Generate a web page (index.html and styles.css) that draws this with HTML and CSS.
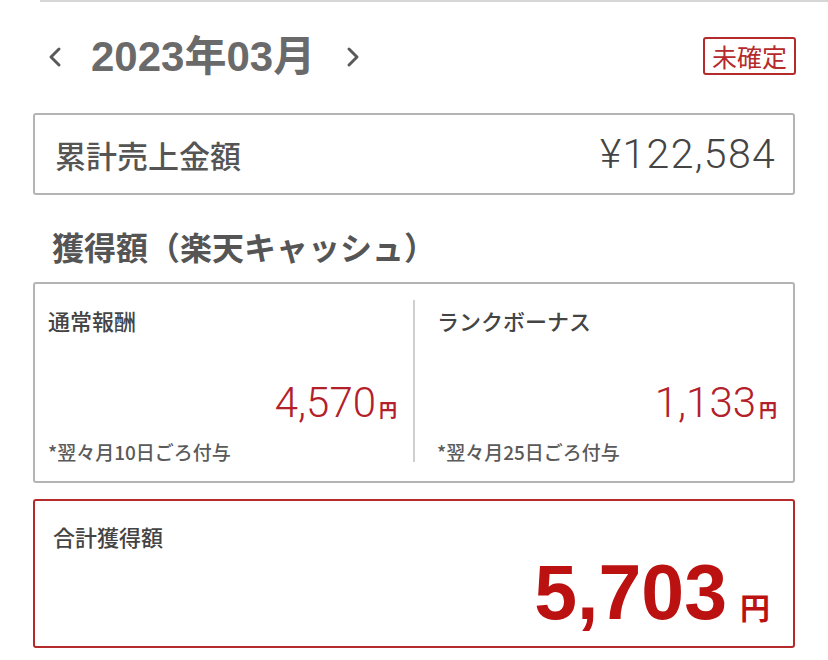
FILE: index.html
```html
<!DOCTYPE html>
<html lang="ja">
<head>
<meta charset="utf-8">
<title>獲得額</title>
<link rel="stylesheet" href="styles.css">
</head>
<body>
<div class="topline"></div>
<main class="page">
  <div class="header">
    <div class="month-nav">
      <svg class="chev chev-prev" viewBox="0 0 16 22" aria-hidden="true"><path d="M12 3 L4 11 L12 19"/></svg>
      <span class="month">2023年03月</span>
      <svg class="chev chev-next" viewBox="0 0 16 22" aria-hidden="true"><path d="M4 3 L12 11 L4 19"/></svg>
    </div>
    <span class="badge">未確定</span>
  </div>

  <div class="card sales">
    <span class="sales-label">累計売上金額</span>
    <span class="sales-amount">¥122,584</span>
  </div>

  <h2 class="section-title">獲得額（楽天キャッシュ）</h2>

  <div class="card split">
    <div class="cell cell-left">
      <div class="cell-label">通常報酬</div>
      <div class="cell-amount"><span class="num">4,570</span><span class="yen">円</span></div>
      <div class="cell-note">*翌々月10日ごろ付与</div>
    </div>
    <div class="divider"></div>
    <div class="cell cell-right">
      <div class="cell-label">ランクボーナス</div>
      <div class="cell-amount"><span class="num">1,133</span><span class="yen">円</span></div>
      <div class="cell-note">*翌々月25日ごろ付与</div>
    </div>
  </div>

  <div class="card grand">
    <div class="grand-label">合計獲得額</div>
    <div class="grand-amount"><span class="grand-num">5,703</span><span class="grand-yen">円</span></div>
  </div>
</main>
</body>
</html>
```

FILE: styles.css
```css
* { box-sizing: border-box; }

html, body {
  margin: 0;
  padding: 0;
  background: #ffffff;
}

body {
  font-family: "Noto Sans CJK JP", "Noto Sans", sans-serif;
  color: #555555;
}

.topline {
  margin-left: 40px;
  border-top: 2px solid #d6d6d6;
}

.page {
  padding: 0 33px;
}

.header {
  margin-top: 35px;
  height: 38px;
  display: flex;
  align-items: center;
  justify-content: space-between;
}

.month-nav {
  display: flex;
  align-items: center;
  padding-top: 2px;
}

.chev {
  width: 16px;
  height: 22px;
  fill: none;
  stroke: #5a5a5a;
  stroke-width: 3;
  stroke-linecap: round;
  stroke-linejoin: round;
}

.chev-prev { margin-left: 14px; }

.month {
  margin-left: 28px;
  margin-right: 30px;
  font-family: "Liberation Sans", "Noto Sans CJK JP", sans-serif;
  font-weight: 700;
  font-size: 42px;
  line-height: 40px;
  color: #6a6a6a;
}

.badge {
  height: 38px;
  display: flex;
  align-items: center;
  padding: 0 7px;
  margin-right: -1px;
  border: 2px solid #b52a2a;
  border-radius: 3px;
  color: #b52a2a;
  font-size: 25px;
}

.card {
  border: 2px solid #b4b4b4;
  border-radius: 3px;
  background: #ffffff;
}

.sales {
  margin-top: 38px;
  height: 82px;
  display: flex;
  align-items: center;
  justify-content: space-between;
  padding: 0 18px 0 20px;
}

.sales-label {
  font-size: 31px;
  font-weight: 500;
  color: #555555;
}

.sales-amount {
  font-family: "Roboto", "Liberation Sans", sans-serif;
  font-weight: 300;
  font-size: 41px;
  letter-spacing: 1.3px;
  margin-right: -1px;
  color: #444444;
}

.section-title {
  margin: 31px 0 16px 19px;
  font-size: 32px;
  line-height: 40px;
  font-weight: 700;
  color: #555555;
}

.split {
  display: grid;
  grid-template-columns: 1fr 2px 1fr;
  height: 201px;
}

.divider {
  background: #cfcfcf;
  margin: 16px 0 19px;
}

.cell {
  padding: 20px 16px 17px 13px;
  display: flex;
  flex-direction: column;
}

.cell-right { padding-left: 22px; }

.cell-label {
  font-size: 22px;
  line-height: 32px;
  font-weight: 500;
  color: #444444;
}

.cell-amount {
  margin-top: 43px;
  height: 48px;
  display: flex;
  align-items: baseline;
  justify-content: flex-end;
}

.num {
  font-family: "Roboto", "Liberation Sans", sans-serif;
  font-weight: 300;
  font-size: 42px;
  line-height: 48px;
  color: #b3202a;
}

.yen {
  margin-left: 3px;
  font-size: 18px;
  font-weight: 700;
  color: #b3202a;
}

.cell-note {
  margin-top: 13px;
  font-size: 19px;
  line-height: 24px;
  font-weight: 500;
  color: #5a5a5a;
}

.grand {
  margin-top: 16px;
  height: 149px;
  border-color: #b52a2a;
  padding: 20px 23px 0 18px;
}

.grand-label {
  font-size: 22px;
  line-height: 30px;
  font-weight: 500;
  color: #444444;
}

.grand-amount {
  margin-top: 4px;
  display: flex;
  align-items: baseline;
  justify-content: flex-end;
}

.grand-num {
  font-family: "Liberation Sans", sans-serif;
  font-weight: 700;
  font-size: 77px;
  line-height: 74px;
  color: #bb1111;
}

.grand-yen {
  margin-left: 13px;
  font-size: 30px;
  font-weight: 700;
  color: #bb1111;
}
```
